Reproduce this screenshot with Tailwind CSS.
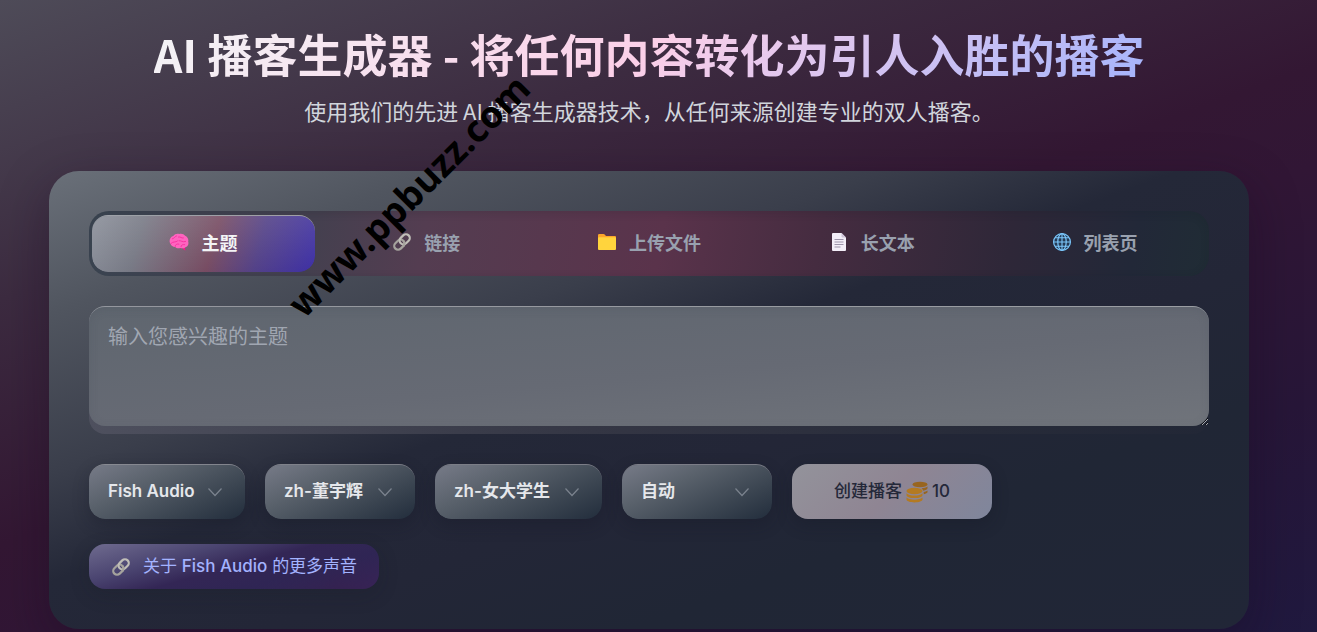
<!DOCTYPE html>
<html lang="zh-CN">
<head>
  <meta charset="UTF-8" />
  <meta name="viewport" content="width=device-width, initial-scale=1.0" />
  <title>AI 播客生成器</title>
  <script src="https://cdn.jsdelivr.net/npm/@tailwindcss/browser@4"></script>
</head>
<body class="min-h-screen font-['Inter','Noto_Sans_CJK_SC',sans-serif] bg-[linear-gradient(160deg,#4e4b58_0%,#473f4f_10%,#3c2b40_27%,#331733_49%,#311635_58%,#271638_79%,#20193f_100%)]">

  <!-- Icons used more than once -->
  <svg class="hidden" aria-hidden="true">
    <symbol id="icon-link" viewBox="0 0 20 20">
      <g fill="none" stroke-width="2.2" transform="rotate(-45 10 10)">
        <rect x="0.6" y="6.2" width="11.2" height="7.6" rx="3.8" stroke="#a5a39d" />
        <rect x="8.2" y="6.2" width="11.2" height="7.6" rx="3.8" stroke="#c0beb8" />
        <path d="M8 13.8a3.8 3.8 0 0 0 3.8-3.8" stroke="#a5a39d" />
      </g>
    </symbol>
    <symbol id="icon-chevron" viewBox="0 0 16 16">
      <path d="M1.5 4.5 8 11.5l6.500-7" fill="none" stroke="#7b838e" stroke-width="1.2" />
    </symbol>
  </svg>

  <main class="relative pl-4 pr-[35px] pt-[26px]">
    <!-- Heading -->
    <header class="text-center font-['Noto_Sans_CJK_SC',sans-serif]">
      <h1 class="mx-auto w-fit text-[45px] leading-14 font-bold text-transparent bg-clip-text bg-[linear-gradient(135deg,#f3f4f6_0%,#fbcfe8_50%,#a5b4fc_100%)]">AI 播客生成器 - 将任何内容转化为引人入胜的播客</h1>
      <p class="mt-3 text-[22px] leading-8 text-gray-300">使用我们的先进 AI 播客生成器技术，从任何来源创建专业的双人播客。</p>
    </header>

    <!-- Generator card -->
    <section class="mx-auto mt-[45px] max-w-[1200px] rounded-[30px] p-10 shadow-[0_16px_50px_rgba(20,8,28,0.35)] bg-[linear-gradient(160deg,#6a7079_0%,#50555f_16%,#3a3e4b_34%,#242838_46%,#232637_60%,#202635_75%,#212637_100%)]">

      <!-- Source tabs -->
      <div role="tablist" class="grid grid-cols-5 rounded-[20px] px-[3px] py-1 text-lg leading-7 font-bold text-gray-400 font-['Noto_Sans_CJK_SC',sans-serif] shadow-[inset_0_2px_8px_rgba(20,24,36,0.15)] bg-[linear-gradient(100deg,#3c4653_0%,#44404f_20%,#543d51_30%,#5a334b_51%,#452c40_65%,#2e2738_82%,#222838_93%,#202c35_100%)]">
        <button role="tab" aria-selected="true" class="flex h-[57px] items-center justify-center gap-3 rounded-2xl border-t border-white/50 bg-clip-padding pb-1 text-gray-100 bg-[linear-gradient(175deg,rgba(255,255,255,0.14),rgba(255,255,255,0)),linear-gradient(105deg,#858a95_0%,#737581_22%,#74485f_54%,#513f86_74%,#3d2fa5_100%)]">
          <svg class="size-5" viewBox="0 0 20 20" aria-hidden="true">
            <path d="M12.500 14.500h3.300l.6 3.900-2-.8z" fill="#f5168c" />
            <path d="M1 11C-.3 7.500 1.800 4.600 4.300 4 5.600 1.900 8.300 1.200 10.200 1.900c2.300-.7 4.800.2 5.900 1.900 2.400 1 3.700 3.400 3.100 5.700.7 2.500-.2 4.700-2.300 5.500-1.600 1.700-4.200 1.400-5.600.9-1.900.7-4.100.4-5.100-1C3.900 14.900 2 13.700 1.800 12.300z" fill="#ff64bf" />
            <path d="M3.500 6.800c2-.4 2.400-2.400 4-2.900M9.500 5c2.600-.7 2.500 1.600 4.900 1M2 11.500c2-2.600 4.500-.6 6.500-2.500M10 8.700c2.500-.3 3 1.800 6.600.8M6.300 14.300c-.4-1.700 1.700-2.700 3.600-2.200M12 14.700c0-1.700 1.500-2.400 3.700-2.100" fill="none" stroke="#f5279a" stroke-width="0.8" stroke-linecap="round" />
          </svg>
          主题
        </button>
        <button role="tab" class="flex items-center justify-center gap-3 pb-1">
          <svg class="size-5" aria-hidden="true"><use href="#icon-link" /></svg>
          链接
        </button>
        <button role="tab" class="flex items-center justify-center gap-3 pb-1">
          <svg class="size-5" viewBox="0 0 20 20" aria-hidden="true">
            <path d="M1 3.200Q1 2 2.200 2h4.300q.7 0 1.200.6L9 4h9q1 0 1 1v6H1z" fill="#fba62b" />
            <rect x="1" y="5.300" width="18" height="12.700" rx="1" fill="#ffd43d" />
          </svg>
          上传文件
        </button>
        <button role="tab" class="flex items-center justify-center gap-3 pb-1">
          <svg class="size-5" viewBox="0 0 20 20" aria-hidden="true">
            <path d="M4 1h8.500l4.500 4.500V18q0 1-1 1H4q-1 0-1-1V2q0-1 1-1z" fill="#f3eef8" />
            <path d="M12.500 1 17 5.500h-3.500q-1 0-1-1z" fill="#cec4d8" />
            <path d="M5.500 7.500h9M5.500 10h9M5.500 12.500h9M5.500 15h6" stroke="#9d94aa" stroke-width="1" />
          </svg>
          长文本
        </button>
        <button role="tab" class="flex items-center justify-center gap-3 pb-1">
          <svg class="size-5" viewBox="0 0 20 20" aria-hidden="true">
            <circle cx="10" cy="10" r="8.900" fill="#243a55" />
            <path d="M1.500 10h17M10 1.500v17M3 5.700h14M3 14.300h14" stroke="#7cc7fb" stroke-width="1.100" />
            <g fill="none" stroke="#7cc7fb" stroke-width="1.200">
              <circle cx="10" cy="10" r="8.400" />
              <ellipse cx="10" cy="10" rx="4.200" ry="8.400" />
            </g>
          </svg>
          列表页
        </button>
      </div>

      <!-- Topic -->
      <div class="mt-[30px] rounded-2xl pb-2 bg-[linear-gradient(90deg,#4e505e_0%,#343644_45%,#272b39_80%,#222736_100%)]">
        <textarea aria-label="主题" placeholder="输入您感兴趣的主题" class="block h-[120px] w-full scheme-dark rounded-2xl border-t border-white/30 px-[19px] py-4 text-xl leading-7 text-gray-100 placeholder:text-[#a0a6b1] shadow-[inset_0_2px_10px_rgba(60,66,80,0.15)] bg-[linear-gradient(175deg,#5f666f_0%,#666a74_55%,#70747b_100%)]"></textarea>
      </div>

      <!-- Voice options -->
      <div class="mt-[30px] flex flex-wrap gap-x-5 gap-y-[25px] text-[17px] font-semibold text-gray-200">
        <div class="grid w-[156px] items-center">
          <select aria-label="语音服务" class="col-start-1 row-start-1 h-[55px] appearance-none rounded-2xl border-t border-white/40 bg-clip-padding pl-[19px] shadow-[0_6px_16px_rgba(20,24,36,0.3)] bg-[linear-gradient(155deg,#777b88_0%,#59616b_35%,#3b4551_70%,#222d3c_100%)]">
            <option>Fish Audio</option>
          </select>
          <svg class="pointer-events-none col-start-1 row-start-1 mr-[22px] size-4 justify-self-end"><use href="#icon-chevron" /></svg>
        </div>
        <div class="grid w-[150px] items-center">
          <select aria-label="主持人一" class="col-start-1 row-start-1 h-[55px] appearance-none rounded-2xl border-t border-white/40 bg-clip-padding pl-[19px] shadow-[0_6px_16px_rgba(20,24,36,0.3)] bg-[linear-gradient(155deg,#777b88_0%,#59616b_35%,#3b4551_70%,#222d3c_100%)]">
            <option>zh-董宇辉</option>
          </select>
          <svg class="pointer-events-none col-start-1 row-start-1 mr-[22px] size-4 justify-self-end"><use href="#icon-chevron" /></svg>
        </div>
        <div class="grid w-[167px] items-center">
          <select aria-label="主持人二" class="col-start-1 row-start-1 h-[55px] appearance-none rounded-2xl border-t border-white/40 bg-clip-padding pl-[19px] shadow-[0_6px_16px_rgba(20,24,36,0.3)] bg-[linear-gradient(155deg,#777b88_0%,#59616b_35%,#3b4551_70%,#222d3c_100%)]">
            <option>zh-女大学生</option>
          </select>
          <svg class="pointer-events-none col-start-1 row-start-1 mr-[22px] size-4 justify-self-end"><use href="#icon-chevron" /></svg>
        </div>
        <div class="grid w-[150px] items-center">
          <select aria-label="语言" class="col-start-1 row-start-1 h-[55px] appearance-none rounded-2xl border-t border-white/40 bg-clip-padding pl-[19px] shadow-[0_6px_16px_rgba(20,24,36,0.3)] bg-[linear-gradient(155deg,#777b88_0%,#59616b_35%,#3b4551_70%,#222d3c_100%)]">
            <option>自动</option>
          </select>
          <svg class="pointer-events-none col-start-1 row-start-1 mr-[22px] size-4 justify-self-end"><use href="#icon-chevron" /></svg>
        </div>
        <button class="flex h-[55px] w-[200px] items-center justify-center gap-1 rounded-2xl text-[#242839] shadow-[0_6px_16px_rgba(20,24,36,0.3)] bg-[linear-gradient(135deg,#93939b_0%,#8f8593_50%,#7f869c_100%)]">
          <span class="font-medium">创建播客</span>
          <svg class="size-[22px]" viewBox="0 0 22 22" aria-hidden="true">
            <g fill="#98651f">
              <ellipse cx="14" cy="3.500" rx="7.500" ry="2.700" />
              <path d="M15.500 7.300c2.500-.1 4.700-.7 6-1.700v1.600c0 1.100-1.800 2.100-4.300 2.500-.2-.9-.8-1.700-1.700-2.400zM17.600 11c1.600-.3 3-.8 3.900-1.500v1.600c0 1-1.500 1.800-3.700 2.200z" />
            </g>
            <g fill="#b37a22">
              <ellipse cx="8.500" cy="10" rx="8" ry="3.300" />
              <path d="M.5 12.300c1.400 1.500 4.500 2.300 8 2.300s6.600-.8 8-2.300v1.900c0 1.600-3.600 2.900-8 2.900s-8-1.300-8-2.900zM.5 16.600c1.400 1.400 4.500 2.100 8 2.100s6.600-.7 8-2.100v2c0 1.600-3.600 2.900-8 2.900s-8-1.300-8-2.900z" />
            </g>
          </svg>
          <span class="font-medium">10</span>
        </button>
      </div>

      <a href="#voices" class="mt-[25px] flex h-[45px] w-fit items-center gap-3 rounded-2xl px-[22px] text-[17px] text-indigo-300 shadow-[0_6px_20px_rgba(20,24,36,0.2)] bg-[linear-gradient(165deg,#6f6b8f_0%,#4a4470_30%,#332655_50%,#2f2554_70%,rgba(47,37,84,0)_100%),linear-gradient(90deg,#2d2a5e_0%,#2e2858_40%,#37204f_85%,#382356_100%)]">
        <svg class="size-5" aria-hidden="true"><use href="#icon-link" /></svg>
        <span>关于 <span class="font-medium">Fish Audio</span> 的更多声音</span>
      </a>
    </section>

    <!-- Site mark -->
    <div class="pointer-events-none absolute left-[408px] top-[195px] -translate-x-1/2 -translate-y-1/2 -rotate-45 font-['Noto_Sans',sans-serif] text-[37px] leading-none font-bold text-black">www.ppbuzz.com</div>
  </main>
</body>
</html>
